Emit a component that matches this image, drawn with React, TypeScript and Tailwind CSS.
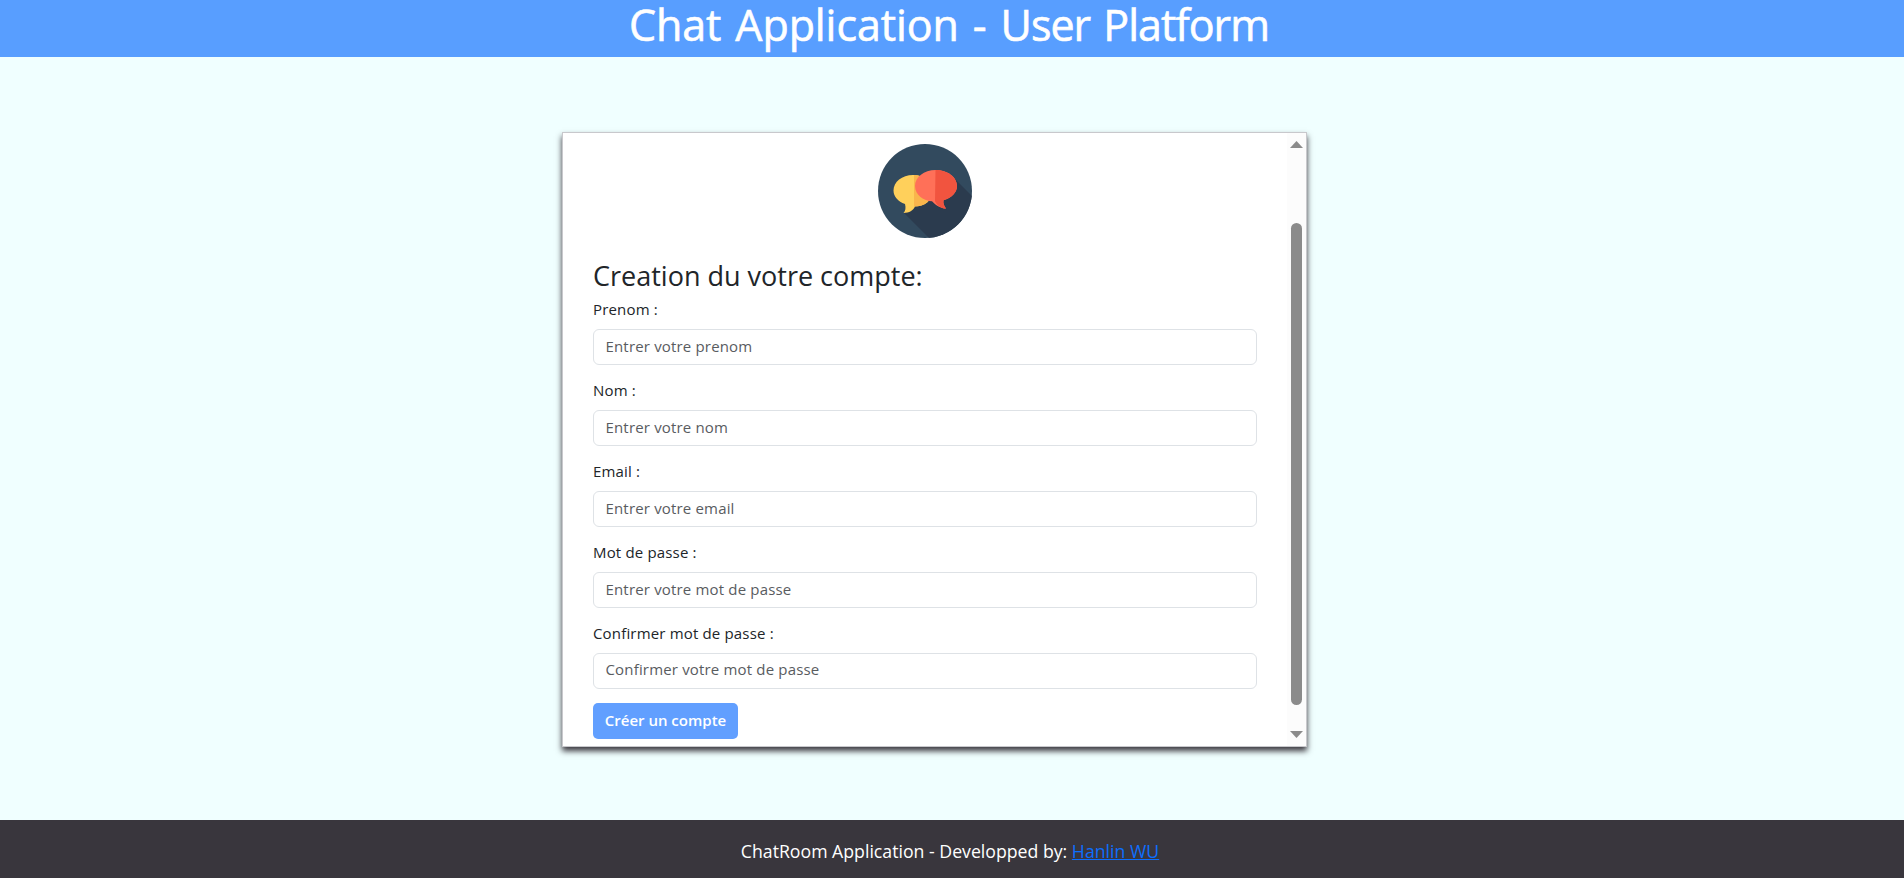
const fields = [
  { label: "Prenom :", hint: "Entrer votre prenom", type: "text" },
  { label: "Nom :", hint: "Entrer votre nom", type: "text" },
  { label: "Email :", hint: "Entrer votre email", type: "email" },
  { label: "Mot de passe :", hint: "Entrer votre mot de passe", type: "password" },
  { label: "Confirmer mot de passe :", hint: "Confirmer votre mot de passe", type: "password" },
];

function ChatLogo() {
  return (
    <svg className="mx-auto block size-[94px]" viewBox="0 0 94 94">
      <defs>
        <clipPath id="disc">
          <circle cx="47" cy="47" r="47" />
        </clipPath>
      </defs>
      <g clipPath="url(#disc)">
        <rect width="94" height="94" fill="#324a5e" />
        <path d="M26 69L52 95H95V53L76 34L50 50Z" fill="#2b3b4e" />
        <path d="M35 31C24 31 15.500 38 15.500 46.500C15.500 52.500 20 57.500 27 60C28 64 27.500 67 25.500 69C31.500 69 35 66.500 37 62.600H36C47 62.600 54 57 54 47C54 38 46 31 35 31Z" fill="#ffd05b" />
        <path d="M36 31C46 31 54 38 54 47C54 57 47 62.600 36 62.600Z" fill="#f9b54c" />
        <path d="M57.500 26C46 26 37 33 37 42C37 51 46 57.200 54 57.200C58 61.500 63 64.500 68 64.500C66 62 65 59 65.500 56.200C73.500 54 79 48.500 79 42C79 33 69.500 26 57.500 26Z" fill="#ff7058" />
        <path d="M57.500 26C69.500 26 79 33 79 42C79 48.500 73.500 54 65.500 56.200C65 59 66 62 68 64.500C63 64.500 59 61.500 57 57.200Z" fill="#f1543f" />
      </g>
    </svg>
  );
}

function Scrollbar() {
  return (
    <div className="flex w-[19px] shrink-0 flex-col items-center bg-[#fcfcfc] pt-2 pb-2">
      <svg className="h-[7px] w-[13px]" viewBox="0 0 13 7">
        <path d="M6.500 0L13 7H0Z" fill="#8b8b8b" />
      </svg>
      <div className="mt-[75px] h-[482px] w-[11px] rounded-full bg-[#8b8b8b]" />
      <svg className="mt-auto h-[7px] w-[13px]" viewBox="0 0 13 7">
        <path d="M0 0H13L6.500 7Z" fill="#8b8b8b" />
      </svg>
    </div>
  );
}

export default function App() {
  return (
    <div className="flex h-[878px] flex-col bg-[#f0ffff] font-['Open_Sans','Noto_Sans',sans-serif] text-[15px] text-[#212529]">
      <header className="flex h-[57px] shrink-0 justify-center bg-[#589eff] pr-[6px]">
        <h1 className="text-[43px] leading-[49px] tracking-[-0.1px] [word-spacing:3px] whitespace-nowrap text-white [-webkit-text-stroke:0.6px_white]">
          Chat Application - <span className="tracking-[-1px]">User Platform</span>
        </h1>
      </header>
      <main className="flex-1 pt-[75px]">
        <section className="ml-[562px] flex h-[615px] w-[745px] border border-[#c8c8cc] bg-white shadow-[0_4px_6px_#39363d]">
          <div className="flex-1 overflow-hidden pt-[11px] pr-[30px] pl-[30px]">
            <ChatLogo />
            <h2 className="mt-[20px] h-[38px] text-[27px] leading-[36px] whitespace-nowrap">Creation du votre compte:</h2>
            <form>
              {fields.map((f) => (
                <div key={f.label} className="mb-[11px] h-[69.900px]">
                  <label className="block h-[33.400px] leading-[27px] tracking-[0.17px]">{f.label}</label>
                  <input
                    type={f.type}
                    placeholder={f.hint}
                    className="block h-[36px] w-[664px] rounded-[6px] border border-[#dee2e6] bg-white pr-3 pb-[3px] pl-[11.500px] leading-[24px] tracking-[0.17px] placeholder:text-[#595c5f] placeholder:opacity-100"
                  />
                </div>
              ))}
              <button type="button" className="mt-[13.500px] block h-[36px] w-[145px] rounded-[5px] bg-[#619fff] pb-[2px] font-semibold whitespace-nowrap text-white">
                Créer un compte
              </button>
            </form>
          </div>
          <Scrollbar />
        </section>
      </main>
      <footer className="flex h-[58px] shrink-0 justify-center bg-[#39363d] pr-1 text-[17.700px] leading-[63px] whitespace-pre text-white">
        ChatRoom Application - Developped by: <a href="#" className="text-[#0d6efd] underline">Hanlin WU</a>
      </footer>
    </div>
  );
}
